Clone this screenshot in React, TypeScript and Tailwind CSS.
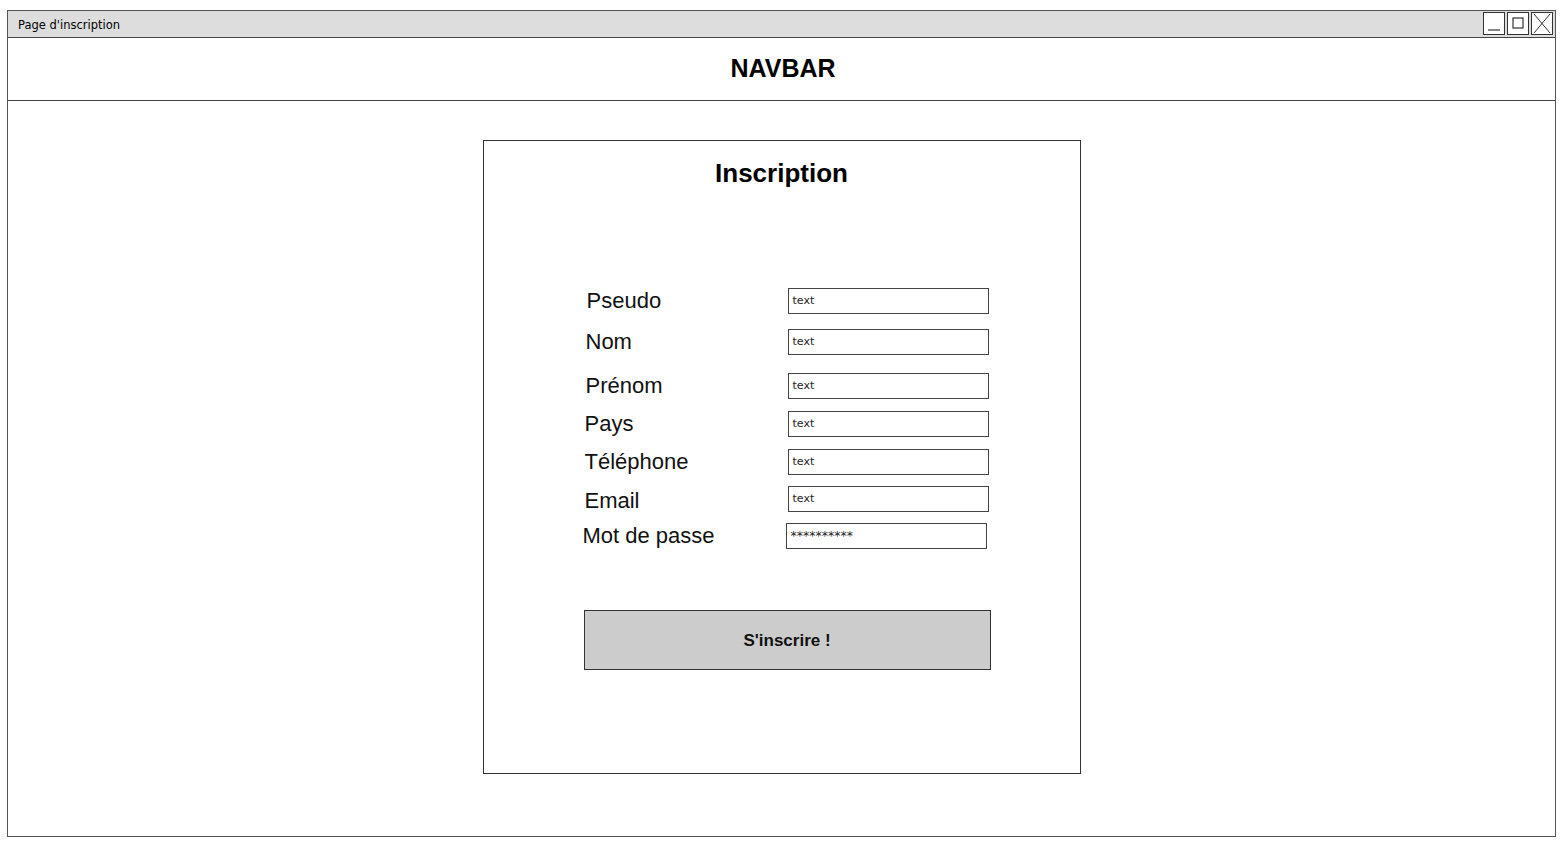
import React from "react";

const fields = [
  { label: "Pseudo", row: "mt-[100px]", lab: "pl-[2px]", value: "text", size: "text-[11px]" },
  { label: "Nom", row: "mt-[15px]", lab: "pl-[1px]", value: "text", size: "text-[11px]" },
  { label: "Prénom", row: "mt-[18px]", lab: "pl-[1px]", value: "text", size: "text-[11px]" },
  { label: "Pays", row: "mt-[12px]", lab: "pl-0", value: "text", size: "text-[11px]" },
  { label: "Téléphone", row: "mt-[12px]", lab: "pl-0", value: "text", size: "text-[11px]" },
  { label: "Email", row: "mt-[11px]", lab: "pl-0 pt-[4px]", value: "text", size: "text-[11px]" },
  { label: "Mot de passe", row: "mt-[11px]", lab: "-ml-[2px]", value: "**********", size: "text-[12.5px]" },
];

const sketch = { fontFamily: '"DejaVu Sans", sans-serif' };

function WindowButtons() {
  return (
    <div className="flex gap-[2px] pr-[2px] pt-[1px]">
      <div className="w-[22px] h-[23px] border border-[#333] bg-white">
        <svg width="20" height="21" viewBox="0 0 20 21">
          <line x1="4" y1="17" x2="16" y2="17" stroke="#444" strokeWidth="1.3" />
        </svg>
      </div>
      <div className="w-[22px] h-[23px] border border-[#333] bg-white">
        <svg width="20" height="21" viewBox="0 0 20 21">
          <rect x="5" y="5" width="10" height="10" fill="none" stroke="#333" strokeWidth="1.2" />
        </svg>
      </div>
      <div className="w-[22px] h-[23px] border border-[#333] bg-white">
        <svg width="20" height="21" viewBox="0 0 20 21">
          <line x1="2" y1="1" x2="18" y2="20" stroke="#333" strokeWidth="1" />
          <line x1="18" y1="1" x2="2" y2="20" stroke="#333" strokeWidth="1" />
        </svg>
      </div>
    </div>
  );
}

export default function App() {
  return (
    <div className="w-[1565px] h-[845px] bg-white pt-[10px] pl-[7px]">
      <div className="w-[1549px] h-[827px] border border-[#555] flex flex-col">
        {/* title bar */}
        <div className="h-[27px] shrink-0 bg-[#dddddd] border-b border-[#444] flex items-start justify-between">
          <span className="text-[11.5px] text-black pl-[10px] pt-[7px] leading-[14px]" style={sketch}>
            Page d'inscription
          </span>
          <WindowButtons />
        </div>

        {/* navbar */}
        <div className="h-[63px] shrink-0 border-b border-[#444] flex items-center justify-center">
          <span className="text-[25px] font-bold text-black font-['Liberation_Sans',Arial,sans-serif] pl-[3px]">
            NAVBAR
          </span>
        </div>

        {/* content */}
        <div className="flex justify-center pt-[39px]">
          <div className="w-[598px] h-[634px] border border-[#333] flex flex-col font-['Liberation_Sans',Arial,sans-serif]">
            <h1 className="text-center text-[26px] leading-[30px] font-bold text-black pt-[17px]">
              Inscription
            </h1>

            {fields.map((f) => (
              <div key={f.label} className={`flex items-center ml-[101px] h-[26px] ${f.row}`}>
                <div className={`w-[203px] shrink-0 text-[22px] leading-[24px] text-[#111] ${f.lab}`}>
                  {f.label}
                </div>
                <div
                  className={`w-[201px] h-[26px] border border-[#444] flex items-center pl-[4px] text-[#222] ${f.size}`}
                  style={sketch}
                >
                  {f.value}
                </div>
              </div>
            ))}

            <div className="ml-[100px] mt-[61px] w-[407px] h-[60px] bg-[#cccccc] border border-[#333] flex items-center justify-center">
              <span className="text-[17px] font-bold text-[#111] pt-[2px]">S'inscrire !</span>
            </div>
          </div>
        </div>
      </div>
    </div>
  );
}
